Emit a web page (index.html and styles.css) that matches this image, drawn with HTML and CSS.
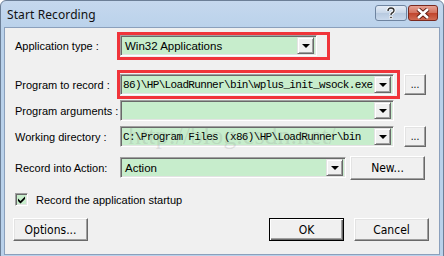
FILE: index.html
```html
<!DOCTYPE html>
<html lang="en">
<head>
  <meta charset="UTF-8">
  <title>Start Recording</title>
  <link rel="stylesheet" href="styles.css">
</head>
<body>
  <div class="window">
    <div class="titlebar">
      <span class="title">Start Recording</span>
      <div class="caption-btns">
        <div class="cap help">
          <svg width="12" height="12" viewBox="0 0 12 12"><path d="M3 4 Q3 1 6 1 Q9 1 9 3.5 Q9 5 7 6 Q6 6.5 6 8" fill="none" stroke="#fff" stroke-width="3.2"/><path d="M3 4 Q3 1 6 1 Q9 1 9 3.5 Q9 5 7 6 Q6 6.5 6 8" fill="none" stroke="#333" stroke-width="1.4"/><rect x="4.8" y="9.3" width="2.4" height="2.2" fill="#333" stroke="#fff" stroke-width="0.8"/></svg>
        </div>
        <div class="cap close">
          <svg width="14" height="11" viewBox="0 0 14 11"><path d="M2 1 L12 10 M12 1 L2 10" stroke="#5a1a10" stroke-width="4.4"/><path d="M2 1 L12 10 M12 1 L2 10" stroke="#fff" stroke-width="2.6"/></svg>
        </div>
      </div>
    </div>

    <div class="client">
      <div class="row row-app">
        <span class="label">Application type :</span>
        <div class="combo combo-app"><span class="val">Win32 Applications</span><span class="arrow"></span></div>
      </div>

      <div class="row row-prog">
        <span class="label">Program to record :</span>
        <div class="combo combo-wide"><span class="val mono">86)\HP\LoadRunner\bin\wplus_init_wsock.exe</span><span class="arrow"></span></div>
        <div class="btn btn-browse">...</div>
      </div>

      <div class="row row-args">
        <span class="label">Program arguments :</span>
        <div class="combo combo-wide"><span class="val"></span><span class="arrow"></span></div>
      </div>

      <div class="row row-dir">
        <span class="label">Working directory :</span>
        <div class="combo combo-wide"><span class="val mono">C:\Program Files (x86)\HP\LoadRunner\bin</span><span class="arrow"></span></div>
        <div class="btn btn-browse">...</div>
      </div>

      <div class="row row-action">
        <span class="label">Record into Action:</span>
        <div class="combo combo-action"><span class="val">Action</span><span class="arrow"></span></div>
        <div class="btn">New...</div>
      </div>

      <div class="check-row">
        <span class="checkbox">
          <svg width="9" height="9" viewBox="0 0 9 9"><path d="M1 3.5 L3.5 6 L8 1.5 L8 4 L3.5 8.5 L1 6 Z" fill="#000"/></svg>
        </span>
        <span class="check-label">Record the application startup</span>
      </div>

      <div class="button-row">
        <div class="btn">Options...</div>
        <div class="spacer"></div>
        <div class="btn btn-default">OK</div>
        <div class="btn">Cancel</div>
      </div>

      <div class="watermark">http://blog.csdn.net/</div>
      <div class="mark mark-app"></div>
      <div class="mark mark-prog"></div>
    </div>
  </div>
</body>
</html>
```

FILE: styles.css
```css
body {
  margin: 0;
  width: 444px;
  height: 256px;
  overflow: hidden;
  background: #ffffff;
  font-family: 'Liberation Sans', Arial, sans-serif;
}

.window {
  width: 444px;
  height: 262px;
  box-sizing: border-box;
  border: 1px solid #6c7f97;
  border-radius: 6px 6px 0 0;
  background: linear-gradient(#c5d8ee, #b9d1ea 30px);
  padding: 0 3px 6px 3px;
  display: flex;
  flex-direction: column;
}

/* title bar */
.titlebar {
  height: 26px;
  display: flex;
  align-items: flex-start;
  justify-content: space-between;
}

.title {
  font-family: 'Noto Sans', 'Liberation Sans', sans-serif;
  font-size: 12px;
  color: #111;
  padding: 5px 0 0 3px;
  letter-spacing: 0.1px;
}

.caption-btns {
  display: flex;
  gap: 1px;
  margin-top: 4px;
  margin-right: 2px;
}

.cap {
  height: 16px;
  box-sizing: border-box;
  border-radius: 3px;
  display: flex;
  justify-content: center;
  align-items: center;
}

.help {
  width: 32px;
  border: 1px solid #6e84a0;
  background: linear-gradient(#e4ecf6, #c7d6e8 50%, #b7c9df 51%, #c9d9ec);
}

.close {
  width: 30px;
  border: 1px solid #7a2a20;
  background: linear-gradient(#e6a294, #d2705c 50%, #c0442c 51%, #d06c54);
}

/* client area */
.client {
  flex: 1;
  position: relative;
  background: #f0f0f0;
  border: 1px solid #8ba0bc;
  padding: 7px 10px 0 10px;
  font-size: 11px;
  color: #000;
}

.row {
  display: flex;
  align-items: center;
  height: 21px;
}

.row-prog { margin-top: 18px; }
.row-args { margin-top: 5px; }
.row-dir { margin-top: 5px; }
.row-action { margin-top: 10px; }

.label {
  width: 105px;
  flex: none;
  white-space: nowrap;
}

.combo {
  height: 21px;
  box-sizing: border-box;
  display: flex;
  align-items: center;
  background: #c7edcc;
  border: 1px solid;
  border-color: #a0a0a0 #ffffff #ffffff #a0a0a0;
  box-shadow: inset 1px 1px #696969, inset -1px -1px #e3e3e3;
  padding: 2px;
}

.combo-app { width: 197px; }
.combo-wide { width: 274px; }
.combo-action { width: 226px; }

.val {
  flex: 1;
  padding-left: 2px;
  font-size: 11.5px;
  white-space: nowrap;
  overflow: hidden;
}

.val.mono {
  font-family: 'Liberation Mono', 'DejaVu Sans Mono', monospace;
  font-size: 11px;
  letter-spacing: -0.66px;
  padding-left: 0;
}

.arrow {
  width: 17px;
  height: 17px;
  flex: none;
  box-sizing: border-box;
  background: #f0f0f0;
  border: 1px solid;
  border-color: #e3e3e3 #696969 #696969 #e3e3e3;
  box-shadow: inset 1px 1px #ffffff, inset -1px -1px #a0a0a0;
  display: flex;
  justify-content: center;
  align-items: center;
}

.arrow::after {
  content: "";
  border-left: 4px solid transparent;
  border-right: 4px solid transparent;
  border-top: 4px solid #000;
  margin-top: 1px;
}

.btn {
  width: 75px;
  height: 23px;
  box-sizing: border-box;
  background: #f0f0f0;
  border: 1px solid;
  border-color: #ffffff #696969 #696969 #ffffff;
  box-shadow: inset -1px -1px #a0a0a0, inset 1px 1px #e3e3e3;
  display: flex;
  justify-content: center;
  align-items: center;
  font-family: 'Liberation Sans Narrow', 'DejaVu Sans Condensed', sans-serif;
  font-stretch: condensed;
  font-size: 12px;
  flex: none;
}

.btn-browse {
  width: 22px;
  height: 21px;
  margin-left: 10px;
  font-size: 10px;
}

.row-action .btn {
  margin-left: 4px;
  height: 24px;
}

.check-row {
  display: flex;
  align-items: center;
  margin-top: 15px;
  height: 13px;
}

.checkbox {
  width: 13px;
  height: 13px;
  box-sizing: border-box;
  background: #c7edcc;
  border: 1px solid;
  border-color: #a0a0a0 #ffffff #ffffff #a0a0a0;
  box-shadow: inset 1px 1px #696969, inset -1px -1px #e3e3e3;
  display: flex;
  justify-content: center;
  align-items: center;
}

.check-label {
  margin-left: 8px;
}

.button-row {
  display: flex;
  gap: 10px;
  margin-top: 12px;
  margin-left: -2px;
}

.spacer { flex: 1; }

.btn-default {
  border: 1px solid #000;
  box-shadow: inset 1px 1px #ffffff, inset -1px -1px #696969, inset -2px -2px #a0a0a0;
}

/* overlays */
.watermark {
  position: absolute;
  left: 123px;
  top: 93px;
  font-family: 'Liberation Serif', serif;
  font-size: 26px;
  color: rgba(120, 120, 120, 0.18);
  pointer-events: none;
}

.mark {
  position: absolute;
  border: 3px solid #f0343a;
  box-sizing: border-box;
}

.mark-app {
  left: 112px;
  top: 4px;
  width: 213px;
  height: 28px;
}

.mark-prog {
  left: 112px;
  top: 42px;
  width: 283px;
  height: 29px;
}
```
